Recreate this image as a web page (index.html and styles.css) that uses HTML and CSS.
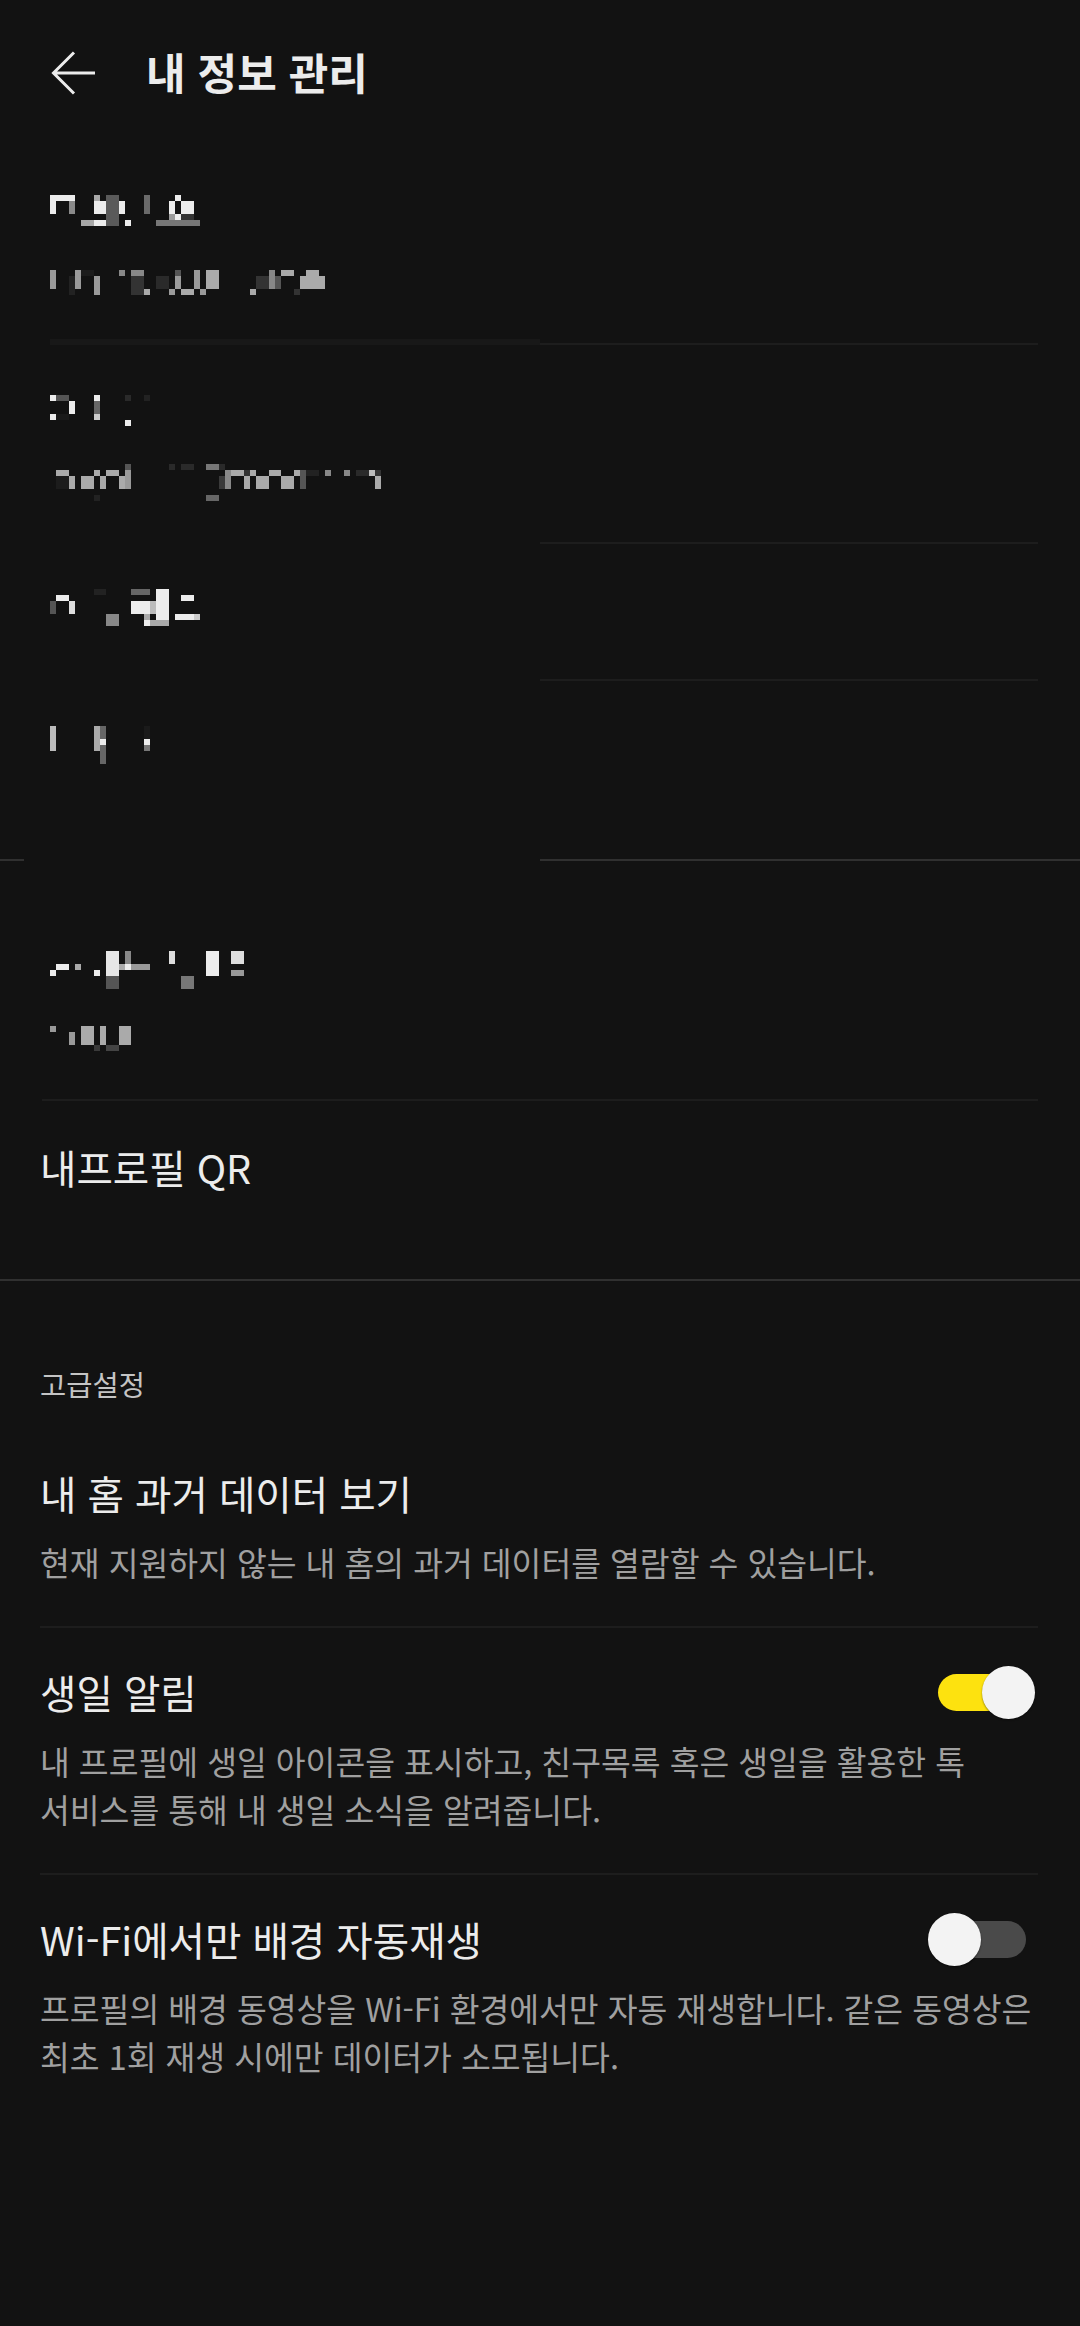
FILE: index.html
```html
<!DOCTYPE html>
<html lang="ko">
<head>
<meta charset="utf-8">
<title>내 정보 관리</title>
<link rel="stylesheet" href="styles.css">
</head>
<body>
<div class="screen">
  <header class="topbar">
    <svg class="back" viewBox="0 0 48 48" aria-hidden="true"><path d="M24 3.5 L3.5 24 L24 44.5 M3.5 24 H45" /></svg>
    <h1 class="title">내 정보 관리</h1>
  </header>

  <section class="profile">
    <div class="mrow r1">
      <svg width="340" height="100" viewBox="50 195 340 100" aria-hidden="true">
        <rect x="50" y="195" width="25" height="6" fill="#ececec"/>
        <rect x="50" y="201" width="6" height="13" fill="#ececec"/>
        <rect x="69" y="201" width="6" height="13" fill="#8a8a8a"/>
        <rect x="94" y="195" width="6" height="6" fill="#a8a8a8"/>
        <rect x="106" y="195" width="13" height="31" fill="#5a5a5a"/>
        <rect x="94" y="201" width="12" height="13" fill="#ececec"/>
        <rect x="119" y="201" width="6" height="13" fill="#ececec"/>
        <rect x="81" y="220" width="13" height="6" fill="#a8a8a8"/>
        <rect x="94" y="220" width="12" height="6" fill="#ececec"/>
        <rect x="125" y="220" width="6" height="6" fill="#ececec"/>
        <rect x="144" y="195" width="6" height="19" fill="#6a6a6a"/>
        <rect x="175" y="195" width="6" height="6" fill="#ececec"/>
        <rect x="169" y="201" width="6" height="13" fill="#ececec"/>
        <rect x="181" y="201" width="13" height="13" fill="#ececec"/>
        <rect x="169" y="214" width="6" height="6" fill="#9a9a9a"/>
        <rect x="175" y="214" width="6" height="6" fill="#ececec"/>
        <rect x="181" y="214" width="13" height="6" fill="#333333"/>
        <rect x="156" y="220" width="44" height="6" fill="#777777"/>

        <rect x="50" y="270" width="6" height="19" fill="#9a9a9a"/>
        <rect x="69" y="276" width="6" height="19" fill="#222222"/>
        <rect x="75" y="270" width="6" height="19" fill="#9a9a9a"/>
        <rect x="81" y="270" width="13" height="6" fill="#1c1c1c"/>
        <rect x="94" y="276" width="6" height="19" fill="#9a9a9a"/>
        <rect x="119" y="270" width="6" height="6" fill="#888888"/>
        <rect x="131" y="270" width="13" height="6" fill="#888888"/>
        <rect x="131" y="276" width="13" height="19" fill="#333333"/>
        <rect x="144" y="289" width="6" height="6" fill="#aaaaaa"/>
        <rect x="156" y="276" width="13" height="13" fill="#2a2a2a"/>
        <rect x="169" y="289" width="6" height="6" fill="#9a9a9a"/>
        <rect x="175" y="270" width="6" height="6" fill="#555555"/>
        <rect x="175" y="276" width="6" height="13" fill="#9a9a9a"/>
        <rect x="181" y="289" width="13" height="6" fill="#aaaaaa"/>
        <rect x="194" y="270" width="6" height="19" fill="#9a9a9a"/>
        <rect x="200" y="289" width="6" height="6" fill="#9a9a9a"/>
        <rect x="206" y="270" width="13" height="19" fill="#aaaaaa"/>
        <rect x="250" y="289" width="6" height="6" fill="#aaaaaa"/>
        <rect x="256" y="276" width="13" height="13" fill="#333333"/>
        <rect x="269" y="270" width="6" height="19" fill="#888888"/>
        <rect x="275" y="276" width="6" height="13" fill="#555555"/>
        <rect x="281" y="270" width="13" height="6" fill="#aaaaaa"/>
        <rect x="294" y="289" width="6" height="6" fill="#333333"/>
        <rect x="306" y="270" width="13" height="6" fill="#aaaaaa"/>
        <rect x="300" y="276" width="25" height="13" fill="#aaaaaa"/>
      </svg>
    </div>
    <div class="div-band"></div>

    <div class="mrow r2">
      <svg width="340" height="106" viewBox="50 395 340 106" aria-hidden="true">
        <rect x="50" y="395" width="6" height="6" fill="#ececec"/>
        <rect x="56" y="395" width="13" height="6" fill="#555555"/>
        <rect x="69" y="401" width="6" height="13" fill="#ececec"/>
        <rect x="50" y="414" width="6" height="6" fill="#ececec"/>
        <rect x="56" y="414" width="13" height="6" fill="#1a1a1a"/>
        <rect x="94" y="395" width="6" height="6" fill="#ececec"/>
        <rect x="94" y="401" width="6" height="13" fill="#666666"/>
        <rect x="94" y="414" width="6" height="6" fill="#cccccc"/>
        <rect x="125" y="420" width="6" height="6" fill="#ececec"/>
        <rect x="125" y="395" width="6" height="6" fill="#2a2a2a"/>
        <rect x="144" y="395" width="6" height="6" fill="#222222"/>

        <rect x="125" y="464" width="6" height="6" fill="#555555"/>
        <rect x="169" y="464" width="6" height="6" fill="#2a2a2a"/>
        <rect x="181" y="464" width="13" height="6" fill="#2a2a2a"/>
        <rect x="206" y="464" width="13" height="6" fill="#777777"/>
        <rect x="219" y="464" width="6" height="6" fill="#2a2a2a"/>
        <rect x="56" y="470" width="13" height="6" fill="#aaaaaa"/>
        <rect x="56" y="476" width="13" height="13" fill="#1c1c1c"/>
        <rect x="69" y="476" width="6" height="13" fill="#aaaaaa"/>
        <rect x="81" y="476" width="13" height="13" fill="#aaaaaa"/>
        <rect x="94" y="470" width="6" height="6" fill="#aaaaaa"/>
        <rect x="100" y="476" width="6" height="13" fill="#aaaaaa"/>
        <rect x="106" y="470" width="13" height="6" fill="#aaaaaa"/>
        <rect x="119" y="476" width="6" height="13" fill="#aaaaaa"/>
        <rect x="125" y="470" width="6" height="19" fill="#999999"/>
        <rect x="94" y="495" width="6" height="6" fill="#222222"/>
        <rect x="206" y="495" width="13" height="6" fill="#666666"/>
        <rect x="219" y="476" width="6" height="13" fill="#3a3a3a"/>
        <rect x="225" y="470" width="6" height="19" fill="#888888"/>
        <rect x="231" y="470" width="13" height="6" fill="#aaaaaa"/>
        <rect x="244" y="470" width="6" height="6" fill="#333333"/>
        <rect x="244" y="476" width="6" height="13" fill="#aaaaaa"/>
        <rect x="250" y="470" width="6" height="6" fill="#aaaaaa"/>
        <rect x="256" y="476" width="13" height="13" fill="#aaaaaa"/>
        <rect x="269" y="470" width="12" height="6" fill="#aaaaaa"/>
        <rect x="281" y="476" width="13" height="13" fill="#aaaaaa"/>
        <rect x="294" y="470" width="6" height="6" fill="#aaaaaa"/>
        <rect x="300" y="470" width="6" height="19" fill="#555555"/>
        <rect x="306" y="470" width="13" height="6" fill="#222222"/>
        <rect x="325" y="470" width="6" height="6" fill="#888888"/>
        <rect x="344" y="470" width="6" height="6" fill="#888888"/>
        <rect x="356" y="470" width="13" height="6" fill="#2a2a2a"/>
        <rect x="369" y="470" width="6" height="6" fill="#bbbbbb"/>
        <rect x="375" y="470" width="6" height="6" fill="#333333"/>
        <rect x="375" y="476" width="6" height="13" fill="#aaaaaa"/>
      </svg>
    </div>
    <div class="div-part"></div>

    <div class="mrow r3">
      <svg width="340" height="37" viewBox="50 589 340 37" aria-hidden="true">
        <rect x="56" y="595" width="13" height="6" fill="#ececec"/>
        <rect x="50" y="601" width="6" height="13" fill="#555555"/>
        <rect x="69" y="601" width="6" height="13" fill="#dddddd"/>
        <rect x="94" y="589" width="12" height="6" fill="#222222"/>
        <rect x="106" y="614" width="13" height="12" fill="#888888"/>
        <rect x="131" y="589" width="19" height="6" fill="#666666"/>
        <rect x="131" y="601" width="19" height="13" fill="#ececec"/>
        <rect x="156" y="589" width="13" height="31" fill="#ececec"/>
        <rect x="150" y="601" width="6" height="13" fill="#bbbbbb"/>
        <rect x="144" y="614" width="6" height="6" fill="#aaaaaa"/>
        <rect x="144" y="620" width="6" height="6" fill="#ececec"/>
        <rect x="150" y="620" width="19" height="6" fill="#aaaaaa"/>
        <rect x="181" y="595" width="13" height="6" fill="#ececec"/>
        <rect x="175" y="614" width="19" height="6" fill="#ececec"/>
        <rect x="194" y="614" width="6" height="6" fill="#cccccc"/>
      </svg>
    </div>
    <div class="div-part"></div>

    <div class="mrow r4">
      <svg width="340" height="38" viewBox="50 726 340 38" aria-hidden="true">
        <rect x="50" y="726" width="6" height="25" fill="#bbbbbb"/>
        <rect x="94" y="726" width="6" height="25" fill="#aaaaaa"/>
        <rect x="100" y="726" width="6" height="13" fill="#666666"/>
        <rect x="100" y="739" width="6" height="6" fill="#ececec"/>
        <rect x="100" y="745" width="6" height="19" fill="#666666"/>
        <rect x="144" y="726" width="6" height="13" fill="#1a1a1a"/>
        <rect x="144" y="739" width="6" height="6" fill="#ececec"/>
        <rect x="144" y="745" width="6" height="6" fill="#777777"/>
      </svg>
    </div>
    <div class="div-gap"></div>

    <div class="mrow r5">
      <svg width="340" height="100" viewBox="50 951 340 100" aria-hidden="true">
        <rect x="50" y="970" width="6" height="6" fill="#ececec"/>
        <rect x="56" y="964" width="13" height="6" fill="#ececec"/>
        <rect x="75" y="964" width="6" height="6" fill="#aaaaaa"/>
        <rect x="94" y="970" width="6" height="6" fill="#ececec"/>
        <rect x="106" y="951" width="13" height="25" fill="#e6e6e6"/>
        <rect x="106" y="976" width="13" height="13" fill="#555555"/>
        <rect x="125" y="951" width="6" height="13" fill="#888888"/>
        <rect x="119" y="964" width="6" height="6" fill="#aaaaaa"/>
        <rect x="125" y="964" width="6" height="6" fill="#ececec"/>
        <rect x="131" y="964" width="19" height="6" fill="#999999"/>
        <rect x="169" y="951" width="6" height="13" fill="#dddddd"/>
        <rect x="181" y="976" width="13" height="13" fill="#777777"/>
        <rect x="206" y="951" width="13" height="25" fill="#ececec"/>
        <rect x="231" y="951" width="13" height="13" fill="#dddddd"/>
        <rect x="231" y="970" width="13" height="6" fill="#999999"/>

        <rect x="50" y="1026" width="6" height="6" fill="#999999"/>
        <rect x="69" y="1032" width="6" height="13" fill="#999999"/>
        <rect x="81" y="1026" width="13" height="19" fill="#aaaaaa"/>
        <rect x="100" y="1026" width="6" height="19" fill="#aaaaaa"/>
        <rect x="94" y="1045" width="6" height="6" fill="#3a3a3a"/>
        <rect x="106" y="1045" width="13" height="6" fill="#444444"/>
        <rect x="119" y="1026" width="12" height="19" fill="#aaaaaa"/>
      </svg>
    </div>
    <div class="div-inner"></div>

    <div class="qr">내프로필 QR</div>
    <div class="div-full"></div>
  </section>

  <section class="settings">
    <h2 class="sec-head">고급설정</h2>

    <div class="item">
      <div class="item-head">
        <span class="item-title">내 홈 과거 데이터 보기</span>
      </div>
      <p class="item-desc">현재 지원하지 않는 내 홈의 과거 데이터를 열람할 수 있습니다.</p>
    </div>

    <div class="item">
      <div class="item-head">
        <span class="item-title">생일 알림</span>
        <span class="toggle on"><span class="knob"></span></span>
      </div>
      <p class="item-desc">내 프로필에 생일 아이콘을 표시하고, 친구목록 혹은 생일을 활용한 톡<br>서비스를 통해 내 생일 소식을 알려줍니다.</p>
    </div>

    <div class="item">
      <div class="item-head">
        <span class="item-title">Wi-Fi에서만 배경 자동재생</span>
        <span class="toggle off"><span class="knob"></span></span>
      </div>
      <p class="item-desc">프로필의 배경 동영상을 Wi-Fi 환경에서만 자동 재생합니다. 같은 동영상은<br>최초 1회 재생 시에만 데이터가 소모됩니다.</p>
    </div>
  </section>
</div>
</body>
</html>
```

FILE: styles.css
```css
* {
  box-sizing: border-box;
  margin: 0;
  padding: 0;
}

html,
body {
  background: #121212;
}

body {
  width: 1080px;
  min-height: 2326px;
  font-family: "Noto Sans CJK KR", "Noto Sans", sans-serif;
  color: #ececec;
}

.topbar {
  height: 146px;
  display: flex;
  align-items: center;
  padding-left: 50px;
}

.back {
  width: 48px;
  height: 48px;
  flex: none;
  fill: none;
  stroke: #ececec;
  stroke-width: 3;
}

.title {
  font-size: 43px;
  font-weight: 700;
  line-height: 52px;
  margin: 0 0 4px 48px;
  color: #ececec;
}

.mrow {
  padding-left: 50px;
}

.mrow svg {
  display: block;
}

.r1 { height: 193px; padding-top: 49px; }
.r2 { height: 197px; padding-top: 50px; }
.r3 { height: 135px; padding-top: 45px; }
.r4 { height: 178px; padding-top: 45px; }
.r5 { height: 238px; padding-top: 90px; }

.qr {
  height: 178px;
  padding: 40px 0 0 40px;
  font-size: 39.6px;
  line-height: 52px;
  color: #ececec;
}

.div-band {
  height: 6px;
  background:
    linear-gradient(#181818, #181818) 50px 0 / 490px 6px no-repeat,
    linear-gradient(#1d1d1d, #1d1d1d) 540px 4px / 498px 2px no-repeat;
}

.div-part {
  height: 2px;
  width: 498px;
  margin-left: 540px;
  background: #1d1d1d;
}

.div-gap {
  height: 2px;
  background: linear-gradient(to right, #303030 24px, transparent 24px, transparent 540px, #303030 540px);
}

.div-inner {
  height: 2px;
  margin: 0 42px;
  background: #1d1d1d;
}

.div-full {
  height: 2px;
  background: #303030;
}

.settings {
  padding: 0 42px 0 40px;
}

.sec-head {
  padding-top: 85px;
  padding-bottom: 27px;
  font-size: 28.5px;
  font-weight: 400;
  line-height: 36px;
  color: #c4c4c4;
}

.item {
  padding: 38px 0 40px;
  border-bottom: 2px solid #1d1d1d;
}

.item:last-child {
  border-bottom: none;
}

.item-head {
  height: 52px;
  display: flex;
  align-items: center;
  justify-content: space-between;
}

.item-title {
  font-size: 39.6px;
  line-height: 52px;
  color: #ececec;
}

.item-desc {
  margin-top: 19px;
  font-size: 32.4px;
  line-height: 48px;
  color: #a0a0a0;
  white-space: nowrap;
}

.toggle {
  position: relative;
  flex: none;
  width: 88px;
  height: 37px;
  border-radius: 19px;
  margin-right: 12px;
}

.toggle.on {
  background: #fde20f;
}

.toggle.off {
  background: #4a4a4a;
}

.knob {
  position: absolute;
  top: -8px;
  width: 53px;
  height: 53px;
  border-radius: 50%;
  background: #f3f3f3;
  box-shadow: 0 1px 2px rgba(0, 0, 0, 0.45);
}

.on .knob {
  right: -9px;
}

.off .knob {
  left: -10px;
}
```
